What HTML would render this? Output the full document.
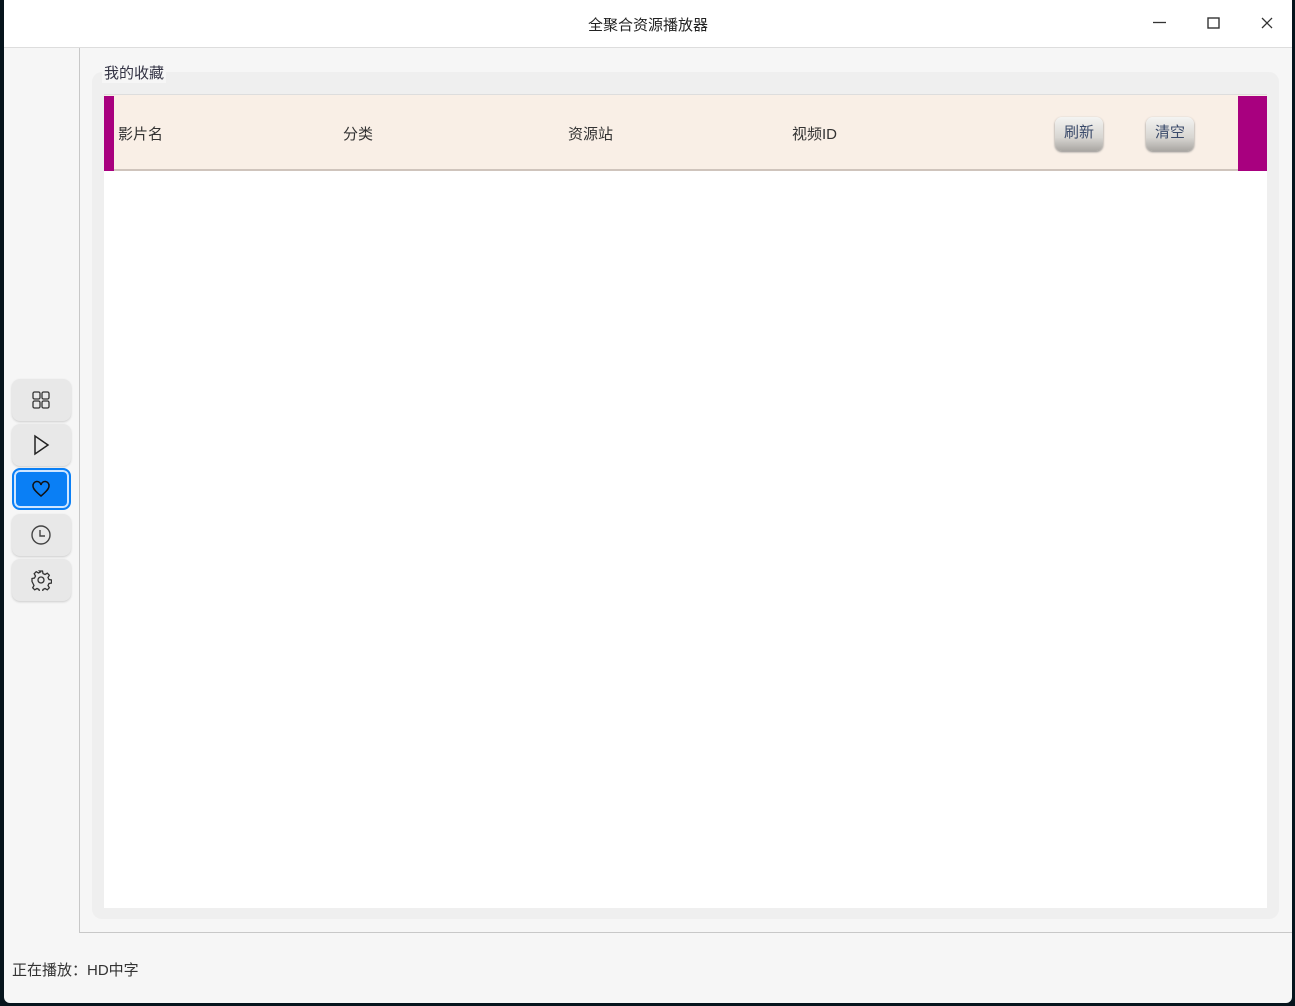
<!DOCTYPE html>
<html><head><meta charset="utf-8"><style>
*{margin:0;padding:0;box-sizing:border-box}
body{width:1295px;height:1006px;background:#06141c;position:relative;overflow:hidden;font-family:"Liberation Sans","Noto Sans CJK SC",sans-serif;color:#333}
.win{position:absolute;left:4px;top:0;width:1288px;height:1003px;background:#f6f6f6;border-radius:0 0 6px 6px;overflow:hidden}
.title{position:absolute;left:0;top:0;width:100%;height:48px;background:#fff;border-bottom:1px solid #ddd}
.title .t{position:absolute;left:0;width:100%;top:14px;text-align:center;font-size:15px;color:#222}
.vline{position:absolute;left:75px;top:48px;width:1px;height:885px;background:#c8c8c8}
.hline{position:absolute;left:75px;top:932px;width:1213px;height:1px;background:#c8c8c8}
.grp{position:absolute;left:88px;top:72px;width:1187px;height:847px;background:#efefef;border-radius:10px}
.gt{position:absolute;left:98px;top:62px;padding:0 2px;background:#f6f6f6;font-size:15px;color:#334}
.tbl{position:absolute;left:100px;top:94px;width:1163px;height:814px;background:#fff;border-top:1px solid #ddd}
.hdr{position:absolute;left:0;top:0;width:1163px;height:76px;background:#f9efe6;border-bottom:2px solid #cfc4bc}
.hdr span{position:absolute;top:28px;font-size:15px;color:#333}
.lb{position:absolute;left:0;top:1px;width:10px;height:75px;background:#a8007f}
.rb{position:absolute;left:1134px;top:1px;width:29px;height:75px;background:#a8007f}
.btn{position:absolute;top:22px;width:48px;height:34px;border-radius:7px;background:linear-gradient(#f4f4f2,#d8d6d2 60%,#a9a6a2);box-shadow:0 1px 2px #888;font-size:15px;text-align:center;line-height:32px;color:#3a4a6a}
.sb{position:absolute;left:8px;width:59px;height:42px;border-radius:8px;background:#e8e8e8;box-shadow:0 1px 2px #ccc;display:flex;align-items:center;justify-content:center;padding-right:2px}
.sb.on{background:#0a7ff5;border:2px solid #0a7ff5;box-shadow:inset 0 0 0 2px #cfe6ff}
.status{position:absolute;left:8px;top:959px;font-size:15px;color:#333}
</style></head><body>
<div class="win">
<div class="title"><div class="t">全聚合资源播放器</div>
<svg style="position:absolute;left:1148px;top:16px" width="130" height="16" viewBox="0 0 130 16"><path d="M1 6.5h13" stroke="#333" stroke-width="1.3"/><rect x="56" y="2" width="11" height="10" fill="none" stroke="#333" stroke-width="1.4"/><path d="M110 2l10 10M120 2l-10 10" stroke="#333" stroke-width="1.3"/></svg>
</div>
<div class="vline"></div><div class="hline"></div>
<div class="grp"></div>
<div class="gt">我的收藏</div>
<div class="tbl"><div class="hdr"><div class="lb"></div><div class="rb"></div>
<span style="left:14px">影片名</span><span style="left:239px">分类</span><span style="left:464px">资源站</span><span style="left:688px">视频ID</span>
<div class="btn" style="left:951px">刷新</div><div class="btn" style="left:1042px">清空</div>
</div></div>
<div class="sb" style="top:379px"><svg width="20" height="20" viewBox="0 0 20 20" fill="none" stroke="#333" stroke-width="1.3"><rect x="2" y="2" width="7" height="7" rx="1.5"/><rect x="11" y="2" width="7" height="7" rx="1.5"/><rect x="2" y="11" width="7" height="7" rx="1.5"/><rect x="11" y="11" width="7" height="7" rx="1.5"/></svg></div>
<div class="sb" style="top:424px"><svg width="20" height="22" viewBox="0 0 20 22" fill="none" stroke="#222" stroke-width="1.5"><path d="M4 2v18l13-9z"/></svg></div>
<div class="sb on" style="top:468px"><svg width="20" height="18" viewBox="0 0 20 18" fill="none" stroke="#111" stroke-width="1.5"><path d="M10 16C4 11 2 8.5 2 6a4 4 0 0 1 8-1 4 4 0 0 1 8 1c0 2.5-2 5-8 10z"/></svg></div>
<div class="sb" style="top:514px"><svg width="22" height="22" viewBox="0 0 22 22" fill="none" stroke="#444" stroke-width="1.4"><circle cx="11" cy="11" r="9"/><path d="M10 6v6h5"/></svg></div>
<div class="sb" style="top:559px"><svg width="22" height="22" viewBox="0 0 22 22" fill="none" stroke="#333" stroke-width="1.3"><circle cx="11" cy="11" r="3"/><path d="M9.5 2h3l.5 2.5 2 1 2.3-1.3 2 2-1.3 2.3 1 2 2.5.5v3l-2.5.5-1 2 1.3 2.3-2 2-2.3-1.3-2 1-.5 2.5h-3l-.5-2.5-2-1-2.3 1.3-2-2 1.3-2.3-1-2L2 12.5v-3l2.5-.5 1-2-1.3-2.3 2-2 2.3 1.3 2-1z"/></svg></div>
<div class="status">正在播放：HD中字</div>
</div>
</body></html>
